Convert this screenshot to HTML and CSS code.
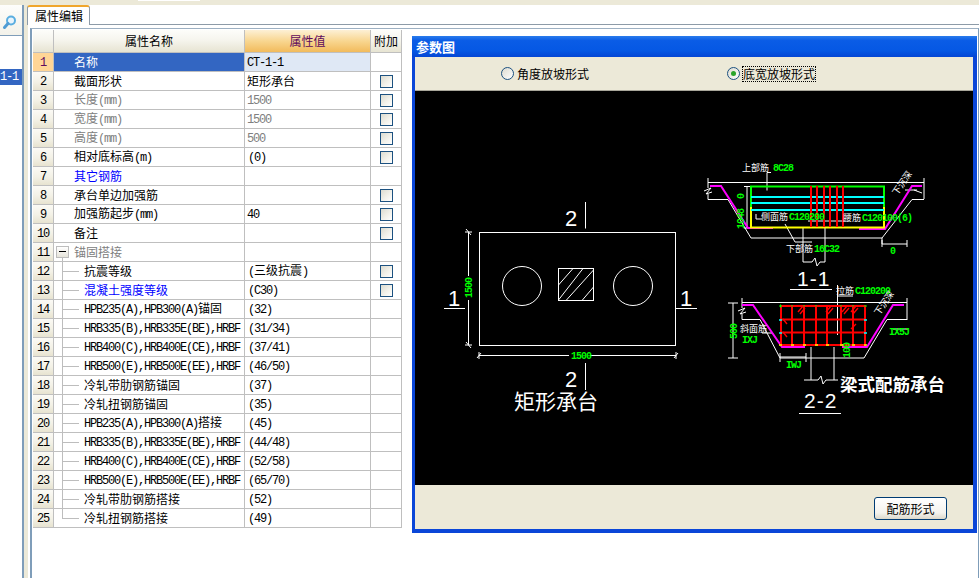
FILE: index.html
```html
<!DOCTYPE html>
<html lang="zh">
<head>
<meta charset="utf-8">
<title>属性编辑</title>
<link rel="stylesheet" href="styles.css">
</head>
<body>
<div class="topbar"><div class="topbar-notch"></div></div>
<div class="main">
  <aside class="side">
    <div class="search">
      <svg class="search-icon" width="16" height="16" viewBox="0 0 16 16"><circle cx="9" cy="6.5" r="4" fill="#e8f4fc" stroke="#5aaee0" stroke-width="2"/><path d="M6 9.5 2.5 13.5" stroke="#4f9cd4" stroke-width="3" stroke-linecap="round"/></svg>
    </div>
    <div class="side-list"><div class="side-item">1-1</div></div>
  </aside>
  <div class="splitter"></div>
  <section class="content">
    <div class="tabbar"><div class="tab">属性编辑</div></div>
    <div class="pane">
      <table class="grid">
        <colgroup><col class="c-num"><col class="c-name"><col class="c-val"><col class="c-add"></colgroup>
        <thead><tr><th class="corner"></th><th>属性名称</th><th class="th-val">属性值</th><th>附加</th></tr></thead>
        <tbody>
          <tr class="sel"><td class="n"><span class="l">1</span></td><td class="name">名称</td><td class="val"><span class="l">CT-1-1</span></td><td></td></tr>
          <tr><td class="n"><span class="l">2</span></td><td class="name">截面形状</td><td class="val">矩形承台</td><td><i class="cb"></i></td></tr>
          <tr class="off"><td class="n"><span class="l">3</span></td><td class="name">长度<span class="l">(mm)</span></td><td class="val"><span class="l">1500</span></td><td><i class="cb"></i></td></tr>
          <tr class="off"><td class="n"><span class="l">4</span></td><td class="name">宽度<span class="l">(mm)</span></td><td class="val"><span class="l">1500</span></td><td><i class="cb"></i></td></tr>
          <tr class="off"><td class="n"><span class="l">5</span></td><td class="name">高度<span class="l">(mm)</span></td><td class="val"><span class="l">500</span></td><td><i class="cb"></i></td></tr>
          <tr><td class="n"><span class="l">6</span></td><td class="name">相对底标高<span class="l">(m)</span></td><td class="val p"><span class="l">(0)</span></td><td><i class="cb"></i></td></tr>
          <tr><td class="n"><span class="l">7</span></td><td class="name link">其它钢筋</td><td class="val"></td><td></td></tr>
          <tr><td class="n"><span class="l">8</span></td><td class="name">承台单边加强筋</td><td class="val"></td><td><i class="cb"></i></td></tr>
          <tr><td class="n"><span class="l">9</span></td><td class="name">加强筋起步<span class="l">(mm)</span></td><td class="val"><span class="l">40</span></td><td><i class="cb"></i></td></tr>
          <tr><td class="n"><span class="l">10</span></td><td class="name">备注</td><td class="val"></td><td><i class="cb"></i></td></tr>
          <tr><td class="n"><span class="l">11</span></td><td class="name group"><i class="minus"></i>锚固搭接</td><td class="val"></td><td></td></tr>
          <tr><td class="n"><span class="l">12</span></td><td class="tree">抗震等级</td><td class="val p"><span class="l">(</span>三级抗震<span class="l">)</span></td><td><i class="cb"></i></td></tr>
          <tr><td class="n"><span class="l">13</span></td><td class="tree link">混凝土强度等级</td><td class="val p"><span class="l">(C30)</span></td><td><i class="cb"></i></td></tr>
          <tr><td class="n"><span class="l">14</span></td><td class="tree"><span class="l">HPB235(A),HPB300(A)</span>锚固</td><td class="val p"><span class="l">(32)</span></td><td></td></tr>
          <tr><td class="n"><span class="l">15</span></td><td class="tree"><span class="l">HRB335(B),HRB335E(BE),HRBF</span></td><td class="val p"><span class="l">(31/34)</span></td><td></td></tr>
          <tr><td class="n"><span class="l">16</span></td><td class="tree"><span class="l">HRB400(C),HRB400E(CE),HRBF</span></td><td class="val p"><span class="l">(37/41)</span></td><td></td></tr>
          <tr><td class="n"><span class="l">17</span></td><td class="tree"><span class="l">HRB500(E),HRB500E(EE),HRBF</span></td><td class="val p"><span class="l">(46/50)</span></td><td></td></tr>
          <tr><td class="n"><span class="l">18</span></td><td class="tree">冷轧带肋钢筋锚固</td><td class="val p"><span class="l">(37)</span></td><td></td></tr>
          <tr><td class="n"><span class="l">19</span></td><td class="tree">冷轧扭钢筋锚固</td><td class="val p"><span class="l">(35)</span></td><td></td></tr>
          <tr><td class="n"><span class="l">20</span></td><td class="tree"><span class="l">HPB235(A),HPB300(A)</span>搭接</td><td class="val p"><span class="l">(45)</span></td><td></td></tr>
          <tr><td class="n"><span class="l">21</span></td><td class="tree"><span class="l">HRB335(B),HRB335E(BE),HRBF</span></td><td class="val p"><span class="l">(44/48)</span></td><td></td></tr>
          <tr><td class="n"><span class="l">22</span></td><td class="tree"><span class="l">HRB400(C),HRB400E(CE),HRBF</span></td><td class="val p"><span class="l">(52/58)</span></td><td></td></tr>
          <tr><td class="n"><span class="l">23</span></td><td class="tree"><span class="l">HRB500(E),HRB500E(EE),HRBF</span></td><td class="val p"><span class="l">(65/70)</span></td><td></td></tr>
          <tr><td class="n"><span class="l">24</span></td><td class="tree">冷轧带肋钢筋搭接</td><td class="val p"><span class="l">(52)</span></td><td></td></tr>
          <tr><td class="n"><span class="l">25</span></td><td class="tree last">冷轧扭钢筋搭接</td><td class="val p"><span class="l">(49)</span></td><td></td></tr>
        </tbody>
      </table>
      <div class="dialog">
        <div class="titlebar">参数图</div>
        <div class="radios">
          <label class="radio r1"><i class="dot"></i><span>角度放坡形式</span></label>
          <label class="radio"><i class="dot on"></i><span class="focus">底宽放坡形式</span></label>
        </div>
        <svg class="drawing" width="558" height="394" viewBox="415 91 558 394">
          <!-- plan -->
          <g class="w1">
            <rect x="479.5" y="232.5" width="196" height="113"/>
            <circle cx="522" cy="286" r="19.5"/>
            <circle cx="633" cy="286" r="19.5"/>
            <rect x="558.5" y="268.5" width="35" height="32"/>
            <path d="M558.5 285 573 268.5M558.5 300 583 268.5M566 300.5 593.5 270M582 300.5 593.5 287"/>
            <path d="M585.5 202V228.5M585.5 363V390M444 308.5H465M676 308.5H697"/>
            <path d="M468.500 232V276M468.500 300V345M465 232H472M465 345H472M479 355.500H569M590 355.500H676M479 352V359M676 352V359M466 229 471 235M466 342 471 348M477 358 481 353M674 358 678 353"/>
          </g>
          <text class="cad" x="565" y="226">2</text>
          <text class="cad" x="565" y="387">2</text>
          <text class="cad" x="448" y="306">1</text>
          <text class="cad" x="680" y="306">1</text>
          <text class="gt" transform="translate(472 298) rotate(-90)">1500</text>
          <text class="gt" x="571" y="359">1500</text>
          <text class="title-cn" x="514" y="409">矩形承台</text>

          <!-- section 1-1 -->
          <g class="w1">
            <path d="M708 182.500H924M708 178V188M704 191 711 188 706 194 712 192M708 194V199.500H728L751 238H882L912 199.500H924M924 178V199"/>
            <path d="M767 190.500V172.500H771M756 214V219H762M747 186V228M744 186.500H751M744 228H751M785 224 795 242H812M803 228V262H812L815 258 817 266 820 262H825M825 228V262"/>
            <path d="M882 238V244H907M882 240V247M907 240V247M917 190H905M914 190 922 193"/>
            <path d="M790 289.500H832M808 221H845"/>
          </g>
          <path class="mg" d="M710 186H721L748 228H773M859 229H885L912 186H922"/>
          <path class="gr" d="M751 207V186.500H884V207"/>
          <path class="yl" d="M751 207V227.500H884V207"/>
          <path class="cy" d="M751 197H884M751 203H884M751 210H884"/>
          <path class="rd" d="M811 186V227M817 186V227M824 186V227M830 186V227M837 186V227M843 186V227"/>
          <text class="wt" x="742" y="171">上部筋</text>
          <text class="gt" x="773" y="171">8C28</text>
          <text class="wt" x="761" y="220">侧面筋</text>
          <text class="gt" x="789" y="220">C120200</text>
          <text class="wt" x="843" y="221">腰筋</text>
          <text class="gt" x="862" y="221">C120100(6)</text>
          <text class="wt" x="786" y="252">下部筋</text>
          <text class="gt" x="814" y="252">16C32</text>
          <text class="gt" transform="translate(744 199) rotate(-90)">0</text>
          <text class="gt" transform="translate(744 229) rotate(-90)">1048</text>
          <text class="gt" x="890" y="254">0</text>
          <text class="wt" transform="translate(897 196) rotate(-55)">下沉深</text>
          <text class="cad2" x="797" y="286">1-1</text>

          <!-- section 2-2 -->
          <g class="w1">
            <path d="M742 302.500H907M742 298V308M738 311 745 308 740 314 746 312M742 314V319.500H760L780 358H864L887 319.500H907M907 298V320"/>
            <path d="M733 303V358M728 303H738M728 358H738M780 353V362M806 353V362M780 357H806M811 347V380H804M834 347V380H838M811 380H818L821 376 823 384 826 380H834"/>
            <path d="M837.500 285V335M837 296H853M762 333H772M799 413.500H841M893 329H908"/>
          </g>
          <path class="mg" d="M742 305H753L782 347H805M842 347H867L893 305H904"/>
          <path class="rd" d="M781 306V345M792 306V345M804 306V345M816 306V345M827 306V345M841 306V345M853 306V345M865 306V345M780 306H866M780 319.500H866M780 332.500H866M780 345H866"/>
          <path class="rd1" d="M798 312 803 306M800 314 805 308M826 312 831 306M828 314 833 308M842 312 847 306M844 314 849 308M851 312 856 306M853 314 858 308M783 319 787 324M783 332 787 337M851 329 856 324"/>
          <path class="dots-g" d="M779 306H782M780.500 304.500V307.500M792 306.500V305M804 306.500V305M816 306.500V305M841 306.500V305M853 306.500V305M864 306H867"/>
          <path class="dots-c" d="M779 320H782M779 333H782M864 320H867M864 333H867"/>
          <path class="dots-y" d="M779 345H782M791 345H794M803 345H806M815 345H818M826 345H829M840 345H843M852 345H855M864 345H867"/>
          <text class="wt" x="836" y="294">拉筋</text>
          <text class="gt" x="855" y="294">C120200</text>
          <text class="wt" x="740" y="332">斜面筋</text>
          <text class="gt" x="742" y="343">IXJ</text>
          <text class="gt" x="889" y="335">IX5J</text>
          <text class="gt" x="786" y="368">IWJ</text>
          <text class="gt" transform="translate(737 339) rotate(-90)">500</text>
          <text class="gt" transform="translate(850 358) rotate(-90)">100</text>
          <text class="wt" transform="translate(879 316) rotate(-55)">下沉深</text>
          <text class="cn-bold" x="840" y="391">梁式配筋承台</text>
          <text class="cad2" x="804" y="408">2-2</text>
        </svg>
        <div class="footer"><button class="btn" type="button">配筋形式</button></div>
      </div>
    </div>
  </section>
</div>
</body>
</html>
```

FILE: styles.css
```css
* { box-sizing: border-box; }
html, body { margin: 0; height: 100%; }
body {
  width: 979px;
  height: 578px;
  overflow: hidden;
  background: #fff;
  color: #000;
  font: 12px "Noto Sans CJK SC", "Liberation Sans", sans-serif;
  display: flex;
  flex-direction: column;
}
.topbar { height: 5px; background: #ece9d8; flex: none; }
.topbar-notch { width: 62px; height: 1px; margin-left: 138px; background: #fff; }
.main { flex: 1; display: flex; min-height: 0; }

.side { width: 22px; flex: none; display: flex; flex-direction: column; }
.search {
  height: 31px;
  padding: 9px 0 0 2px;
  background: linear-gradient(#fdfdfb, #f3f2ea);
  border-bottom: 1px solid #7f9db9;
}
.search-icon { display: block; }
.side-list { padding-top: 33px; }
.side-item {
  height: 16px;
  background: #3366c2;
  color: #fff;
  font: 12px/16px "Liberation Mono", monospace;
  letter-spacing: -1.2px;
}

.splitter {
  width: 6px;
  flex: none;
  background: #ece9d8;
  border-left: 2px solid #7f9db9;
}

.content { flex: 1; min-width: 0; display: flex; flex-direction: column; }
.tabbar {
  height: 20px;
  flex: none;
  margin-left: -1px;
  border-bottom: 1px solid #8d9ba8;
  display: flex;
}
.tab {
  width: 63px;
  height: 20px;
  padding-left: 7px;
  background: #fff;
  border: 1px solid #8d9ba8;
  border-top: 2px solid #f0a62c;
  border-bottom: 0;
  border-radius: 3px 3px 0 0;
  line-height: 17px;
  font-size: 12px;
}
.pane {
  flex: 1;
  min-height: 0;
  margin: 3px 0 0 2px;
  padding: 1px 0 0 1px;
  border-left: 2px solid #7f9db9;
  border-top: 1px solid #9db0c2;
  border-right: 1px solid #7f9db9;
  display: flex;
  align-items: flex-start;
  gap: 10px;
}

.grid {
  width: 369px;
  flex: none;
  table-layout: fixed;
  border-collapse: separate;
  border-spacing: 0;
  font-size: 12px;
}
.c-num { width: 21px; }
.c-name { width: 191px; }
.c-val { width: 126px; }
.c-add { width: 31px; }
.grid th, .grid td {
  padding: 0;
  border-right: 1px solid #bfbfbf;
  border-bottom: 1px solid #bfbfbf;
  white-space: pre;
  overflow: hidden;
  line-height: 12px;
}
.grid th {
  height: 23px;
  font-weight: 400;
  background: linear-gradient(#fdfdfa, #f6f5ee 45%, #e7e4d2);
}
.grid .th-val { background: linear-gradient(#fdf0d5, #f8d690 50%, #f2bb5c); color: #5e0a5e; }
.grid td { height: 19px; position: relative; }
.grid .n { text-align: center; background: linear-gradient(#fbfaf5, #f3f1e6 55%, #e7e3d0); }
.grid .name { padding-left: 20px; }
.grid .val { padding-left: 2px; }
.grid .val.p { padding-left: 3px; }
.l { font-family: "Liberation Mono", monospace; letter-spacing: -1.2px; }

.sel .n { background: #ffd596; color: #5e0a5e; }
.sel .name { background: #3366c2; color: #fff; }
.sel .val { background: #dfe8f5; }
.off .name, .off .val { color: #808080; }
.group { color: #808080; }
.link { color: #0000ff; }

.grid .tree { padding-left: 30px; }
.tree::before, .group::after, .tree::after {
  content: "";
  position: absolute;
}
.tree::before { left: 8px; top: 0; bottom: 0; border-left: 1px solid #bdbdbd; }
.tree.last::before { bottom: 9px; }
.tree::after { left: 8px; top: 9px; width: 17px; border-top: 1px solid #bdbdbd; }
.group::after { left: 8px; top: 15px; bottom: 0; border-left: 1px solid #bdbdbd; }
.minus {
  position: absolute;
  left: 2px;
  top: 3px;
  width: 13px;
  height: 12px;
  border: 1px solid #bdbdbd;
  background: linear-gradient(#fff, #e6e4da);
}
.minus::before {
  content: "";
  position: absolute;
  left: 2px;
  right: 2px;
  top: 4px;
  border-top: 1px solid #000;
}
.cb {
  display: block;
  width: 13px;
  height: 13px;
  margin: 0 auto;
  border: 1px solid #1c5180;
  background: linear-gradient(135deg, #dcdbd0, #f2f1ea 55%, #fff);
}

.dialog {
  width: 565px;
  height: 497px;
  flex: none;
  margin-top: 6px;
  background: #ece9d8;
  border: solid #0a46d8;
  border-width: 0 4px 4px 3px;
  display: flex;
  flex-direction: column;
}
.titlebar {
  height: 21px;
  flex: none;
  margin: 0 -4px 0 -3px;
  padding-left: 4px;
  background: linear-gradient(#2a7cec, #0a5ce6 22%, #0558e4 70%, #0446d4);
  color: #fff;
  font-size: 13px;
  font-weight: 700;
  line-height: 22px;
}
.radios {
  height: 34px;
  flex: none;
  padding-left: 86px;
  display: flex;
  align-items: center;
  border-bottom: 1px solid #a8a69a;
}
.radio { display: flex; align-items: center; gap: 3px; }
.r1 { width: 226px; }
.dot {
  width: 13px;
  height: 13px;
  border-radius: 50%;
  border: 1px solid #1c5180;
  background: linear-gradient(135deg, #dcdbd0, #fff);
  display: flex;
  align-items: center;
  justify-content: center;
}
.dot.on::before {
  content: "";
  width: 5px;
  height: 5px;
  border-radius: 50%;
  background: #2ba52b;
}
.focus { outline: 1px dotted #000; line-height: 14px; }

.drawing { display: block; flex: none; background: #000; }
.w1 { fill: none; stroke: #fff; stroke-width: 1; }
.mg { fill: none; stroke: #ff00ff; stroke-width: 2; }
.gr { fill: none; stroke: #00ff00; stroke-width: 2; }
.yl { fill: none; stroke: #ffff00; stroke-width: 2; }
.cy { fill: none; stroke: #00ffff; stroke-width: 2; }
.rd { fill: none; stroke: #ff0000; stroke-width: 2; }
.rd1 { fill: none; stroke: #ff0000; stroke-width: 1.4; }
.dots-g { fill: none; stroke: #00ff00; stroke-width: 1; }
.dots-c { fill: none; stroke: #00ffff; stroke-width: 1.5; }
.dots-y { fill: none; stroke: #ffff00; stroke-width: 1.5; }
.cad { fill: #fff; font: 22px "Liberation Sans", sans-serif; }
.cad2 { fill: #fff; font: 21px "Liberation Sans", sans-serif; letter-spacing: 1px; }
.gt { fill: #00ff00; font: 700 10px "Liberation Mono", monospace; letter-spacing: -1px; }
.wt { fill: #fff; font: 9px "Noto Sans CJK SC", sans-serif; }
.title-cn { fill: #fff; font: 21px "Noto Sans CJK SC", sans-serif; }
.cn-bold { fill: #fff; font: 700 17.500px "Noto Sans CJK SC", sans-serif; }

.footer {
  flex: 1;
  display: flex;
  justify-content: flex-end;
  align-items: flex-start;
  padding: 12px 26px 0 0;
}
.btn {
  width: 73px;
  height: 23px;
  padding: 0;
  border: 1px solid #003c74;
  border-radius: 3px;
  background: linear-gradient(#fff, #f4f3ee 70%, #dcd8ca);
  color: #000;
  font: 12px "Noto Sans CJK SC", sans-serif;
}
```
